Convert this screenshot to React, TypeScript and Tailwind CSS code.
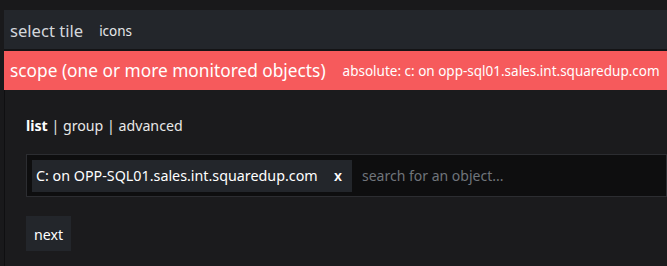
import React from "react";

const font = { fontFamily: '"Noto Sans", "Open Sans", sans-serif' };

const App: React.FC = () => {
    return (
        <div className="w-[667px] h-[266px] bg-[#19191b] pt-[10px] pl-[4px] overflow-hidden" style={font}>
            <div className="h-[39px] bg-[#23262b] flex items-center pl-[6px] pt-[3px] text-[#d4d7db]">
                <span className="text-[16.6px]">select tile</span>
                <span className="ml-[16px] text-[13.5px] text-[#e6e8ea]">icons</span>
            </div>
            <div className="h-[2px] bg-[#141416]" />
            <div className="h-[39px] bg-[#f65a5c] flex items-center pl-[6px] pt-[1px] text-white whitespace-nowrap">
                <span className="text-[17.3px]">scope (one or more monitored objects)</span>
                <span className="ml-[17px] text-[13.5px]">absolute: c: on opp-sql01.sales.int.squaredup.com</span>
            </div>
            <div className="border-l border-[#0f0f11] bg-[#1b1b1d] h-full pl-[21px] pt-[26px]">
                <div className="text-[14.2px] text-[#e8e8e8] h-[20px] leading-[20px]">
                    <span className="font-bold text-white">list</span> | group | advanced
                </div>
                <div className="mt-[18px] h-[43px] border border-[#2c2d31] bg-[#0e0e0f] flex items-center pl-[5px] whitespace-nowrap">
                    <div className="h-[32px] w-[320px] bg-[#23262b] flex items-center pl-[4px] text-[14.3px] text-white">
                        <span>C: on OPP-SQL01.sales.int.squaredup.com</span>
                        <span className="ml-auto mr-[10px] font-semibold">x</span>
                    </div>
                    <span className="ml-[10px] text-[14px] text-[#70757b]">search for an object...</span>
                </div>
                <button className="mt-[19px] w-[45px] h-[35px] bg-[#23262b] text-[14.2px] text-white flex items-center justify-center pt-[3px]">
                    next
                </button>
            </div>
        </div>
    );
};

export default App;
